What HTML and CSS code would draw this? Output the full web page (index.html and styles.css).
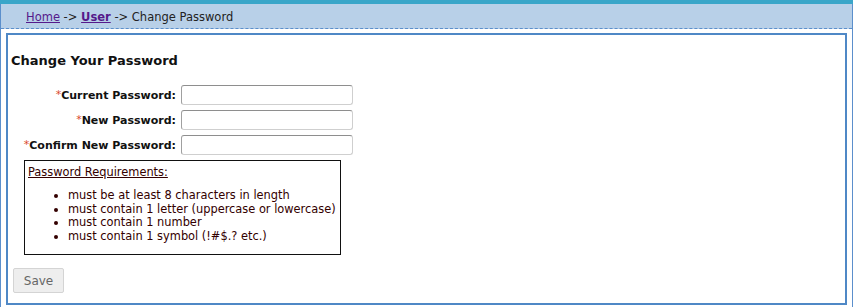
FILE: index.html
```html
<!DOCTYPE html>
<html>
<head>
<meta charset="utf-8">
<link rel="stylesheet" href="styles.css">
</head>
<body>
<div class="topbar"></div>
<div class="page">
  <div class="crumbs">
    <a class="link" href="#">Home</a> -&gt; <a class="link strong" href="#">User</a> -&gt; Change Password
  </div>
  <div class="panel">
    <h1 class="title">Change Your Password</h1>
    <table class="form">
      <tr>
        <td class="label"><span class="req">*</span>Current Password:</td>
        <td><input class="field" type="password"></td>
      </tr>
      <tr>
        <td class="label"><span class="req">*</span>New Password:</td>
        <td><input class="field" type="password"></td>
      </tr>
      <tr>
        <td class="label"><span class="req">*</span>Confirm New Password:</td>
        <td><input class="field" type="password"></td>
      </tr>
    </table>
    <div class="rules">
      <div class="rules-title">Password Requirements:</div>
      <ul class="rules-list">
        <li>must be at least 8 characters in length</li>
        <li>must contain 1 letter (uppercase or lowercase)</li>
        <li>must contain 1 number</li>
        <li>must contain 1 symbol (!#$.? etc.)</li>
      </ul>
    </div>
    <button class="save" type="button">Save</button>
  </div>
</div>
</body>
</html>
```
FILE: styles.css
```css
html, body {
  margin: 0;
  padding: 0;
  background: #fff;
}
body {
  font-family: "DejaVu Sans", Verdana, sans-serif;
  font-size: 11px;
  color: #222;
}
.topbar {
  height: 4px;
  background: #3aa6c9;
}
.page {
  border-left: 1px solid #5b8fcc;
  border-right: 1px solid #5b8fcc;
  height: 303px;
  box-sizing: border-box;
}
.crumbs {
  height: 24px;
  background: #b8d0e8;
  border-bottom: 1px dashed #5b8fcc;
  padding-left: 25px;
  font-size: 11.5px;
  line-height: 26px;
  color: #222;
}
.link {
  color: #551a8b;
  text-decoration: underline;
}
.strong {
  font-weight: bold;
}
.panel {
  margin: 4px 5px 0 5px;
  border: 2px solid #4f88c6;
  height: 272px;
  box-sizing: border-box;
  padding: 0 3px;
}
.title {
  font-size: 13px;
  font-weight: bold;
  color: #111;
  margin: 18px 0 16px 0;
  line-height: 16px;
}
.form {
  border-collapse: collapse;
  margin-left: 0;
}
.form td {
  padding: 0 0 5px 0;
}
.label {
  text-align: right;
  font-weight: bold;
  font-size: 11px;
  color: #111;
  padding-right: 5px !important;
  width: 165px;
  white-space: nowrap;
}
.req {
  color: #d9472b;
  font-weight: normal;
  font-size: 11px;
  vertical-align: 1px;
}
.field {
  display: block;
  width: 172px;
  height: 20px;
  box-sizing: border-box;
  border: 1px solid #cfcfcf;
  border-top-color: #8e8e8e;
  border-left-color: #a0a0a0;
  border-radius: 3px;
  margin: 0;
  padding: 0;
}
.rules {
  margin: 0 0 0 13px;
  width: 317px;
  height: 95px;
  box-sizing: border-box;
  border: 1px solid #111;
  padding: 4px 0 3px 3px;
  color: #300;
  font-size: 11.4px;
}
.rules-title {
  text-decoration: underline;
  line-height: 14px;
}
.rules-list {
  margin: 10px 0 0 0;
  padding-left: 40px;
  line-height: 13.7px;
  white-space: nowrap;
}
.save {
  display: block;
  margin: 13px 0 0 2px;
  width: 51px;
  height: 25px;
  background: #eeeeee;
  border: 1px solid #d4d4d4;
  border-radius: 2px;
  font-family: "DejaVu Sans", Verdana, sans-serif;
  font-size: 12px;
  color: #666;
  padding: 0;
}
```
